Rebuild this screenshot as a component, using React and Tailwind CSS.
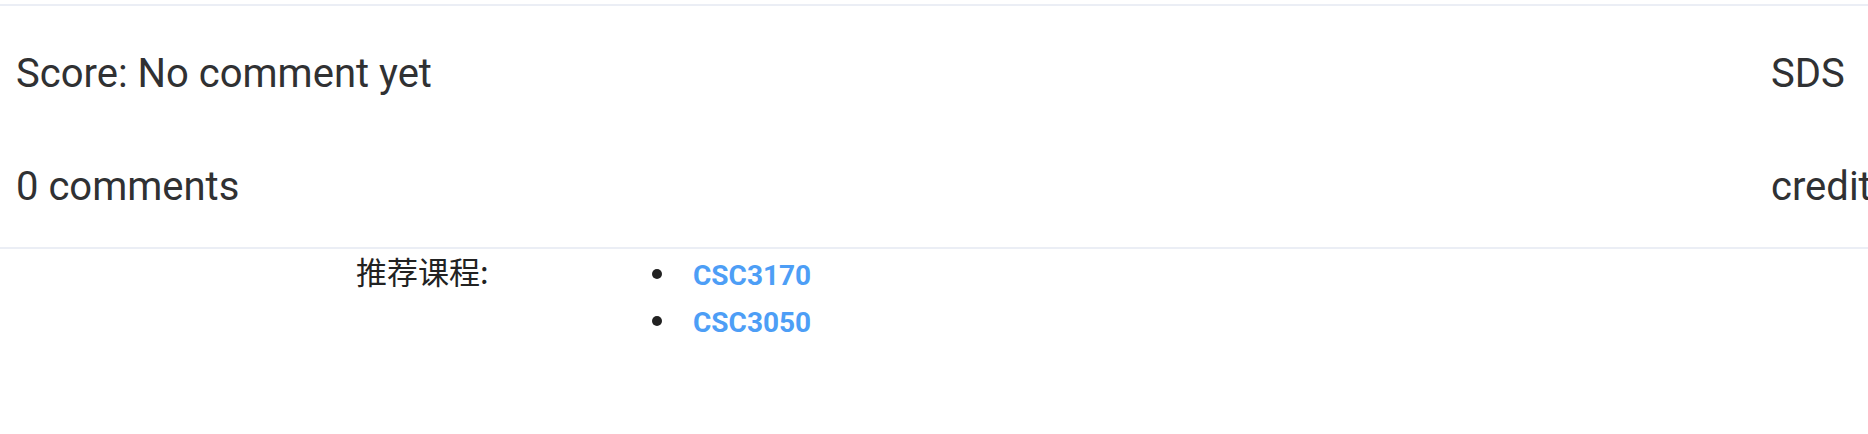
export default function App() {
  const courses = ['CSC3170', 'CSC3050'];

  return (
    <div className="w-[1868px] h-[434px] overflow-hidden bg-white font-['Roboto','Noto_Sans_CJK_SC',sans-serif]">
      <div className="h-1" />

      {/* course summary card */}
      <section className="flex border-y-2 border-[#ebeef5] text-[40px] leading-[47px] text-[#303133] whitespace-nowrap">
        <div className="w-[1771px] shrink-0 pl-4 pt-[44px] pb-[37px] flex flex-col gap-[66px]">
          <p>Score: No comment yet</p>
          <p>0 comments</p>
        </div>
        <div className="pt-[44px] pb-[37px] flex flex-col gap-[66px]">
          <p>SDS</p>
          <p>credits: 3</p>
        </div>
      </section>

      {/* recommended courses */}
      <div className="flex items-start pl-[356px]">
        <span className="w-[296px] shrink-0 mt-[2px] text-[31px] leading-[40px] text-[#222] font-['Noto_Sans_CJK_SC',sans-serif]">
          推荐课程:
        </span>
        <ul className="flex flex-col mt-[3px]">
          {courses.map((c) => (
            <li key={c} className="flex items-start gap-[31px] text-[28px] leading-[47px]">
              <span className="mt-[17px] w-[10px] h-[10px] rounded-full bg-[#222]" />
              <a href="#" className="font-bold text-[#4d9ef6]">
                {c}
              </a>
            </li>
          ))}
        </ul>
      </div>
    </div>
  );
}
